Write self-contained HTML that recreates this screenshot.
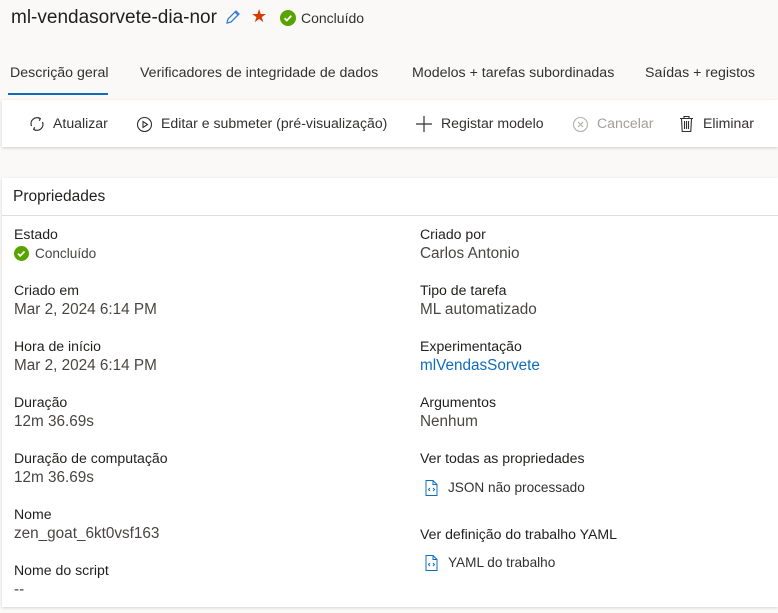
<!DOCTYPE html>
<html><head><meta charset="utf-8"><style>
*{margin:0;padding:0;box-sizing:border-box}
body{width:778px;height:613px;background:#faf9f8;font-family:"Liberation Sans",sans-serif;color:#323130;position:relative;overflow:hidden}
.a{position:absolute;white-space:nowrap}
.lbl{font-size:14.1px;color:#201f1e}
.val{font-size:15.3px;color:#484644}
.tab{font-size:14.2px;color:#323130;top:65px}
.tb{font-size:14.1px;color:#323130;top:115px}
</style></head><body>
<div class="a" style="left:11px;top:7px;font-size:19px;color:#201f1e">ml-vendasorvete-dia-nor</div>
<svg class="a" style="left:224px;top:8px" width="18" height="18" viewBox="0 0 18 18"><path d="M3 15l1-4 8-8 3 3-8 8z M11 4l3 3" fill="none" stroke="#3a7bd5" stroke-width="1.3"/></svg>
<div class="a" style="left:251px;top:6px;font-size:18px;color:#d83b01">★</div>
<svg class="a" style="left:280px;top:10px" width="16" height="16"><circle cx="8" cy="8" r="8" fill="#57a300"/><path d="M4.5 8.2l2.3 2.3 4.5-4.7" fill="none" stroke="#fff" stroke-width="1.8"/></svg>
<div class="a" style="left:301px;top:10px;font-size:14px;color:#323130">Concluído</div>

<div class="a tab" style="left:10px">Descrição geral</div>
<div class="a" style="left:8px;top:93px;width:100px;height:2px;background:#0f6cbd"></div>
<div class="a tab" style="left:140px">Verificadores de integridade de dados</div>
<div class="a tab" style="left:412px">Modelos + tarefas subordinadas</div>
<div class="a tab" style="left:645px">Saídas + registos</div>

<div class="a" style="left:2px;top:100px;width:776px;height:47px;background:#fff;box-shadow:0 1px 3px rgba(0,0,0,.18)"></div>
<svg class="a" style="left:28px;top:115px" width="18" height="18" viewBox="0 0 18 18" fill="none" stroke="#323130" stroke-width="1.2"><path d="M3.5 11A6 6 0 0 1 12 3.5M14.5 7A6 6 0 0 1 6 14.5M10 2.5l2.3 1-1 2.3M8 15.5l-2.3-1 1-2.3"/></svg>
<div class="a tb" style="left:53px">Atualizar</div>
<svg class="a" style="left:136px;top:116px" width="17" height="17"><circle cx="8.5" cy="8.5" r="7" fill="none" stroke="#323130" stroke-width="1.1"/><path d="M7 5.5v6l4.5-3z" fill="none" stroke="#323130" stroke-width="1.1"/></svg>
<div class="a tb" style="left:161px">Editar e submeter (pré-visualização)</div>
<svg class="a" style="left:415px;top:115px" width="18" height="18"><path d="M9 1v16M1 9h16" stroke="#323130" stroke-width="1.2"/></svg>
<div class="a tb" style="left:441px">Registar modelo</div>
<svg class="a" style="left:572px;top:116px" width="17" height="17"><circle cx="8.5" cy="8.5" r="7" fill="none" stroke="#b3b0ad" stroke-width="1.1"/><path d="M6 6l5 5M11 6l-5 5" stroke="#b3b0ad" stroke-width="1.1"/></svg>
<div class="a tb" style="left:597px;color:#a19f9d">Cancelar</div>
<svg class="a" style="left:679px;top:115px" width="15" height="18" viewBox="0 0 15 18" fill="none" stroke="#323130" stroke-width="1.1"><path d="M1 3.5h13M5 3.5V1.5h5v2M2.5 3.5l.7 13h8.6l.7-13M5.5 6v8M7.5 6v8M9.5 6v8"/></svg>
<div class="a tb" style="left:703px">Eliminar</div>

<div class="a" style="left:2px;top:178px;width:776px;height:429px;background:#fff;box-shadow:0 1px 3px rgba(0,0,0,.15)"></div>
<div class="a" style="left:13px;top:188px;font-size:15.5px;color:#201f1e">Propriedades</div>
<div class="a" style="left:2px;top:215px;width:776px;height:1px;background:#e1dfdd"></div>

<div class="a lbl" style="left:14px;top:226px">Estado</div>
<svg class="a" style="left:14px;top:246px" width="15" height="15"><circle cx="7.5" cy="7.5" r="7.5" fill="#57a300"/><path d="M4 7.7l2.2 2.2 4.3-4.4" fill="none" stroke="#fff" stroke-width="1.7"/></svg>
<div class="a" style="left:35px;top:246px;font-size:13.6px;color:#484644">Concluído</div>
<div class="a lbl" style="left:14px;top:282px">Criado em</div>
<div class="a val" style="left:14px;top:301px">Mar 2, 2024 6:14 PM</div>
<div class="a lbl" style="left:14px;top:338px">Hora de início</div>
<div class="a val" style="left:14px;top:357px">Mar 2, 2024 6:14 PM</div>
<div class="a lbl" style="left:14px;top:394px">Duração</div>
<div class="a val" style="left:14px;top:413px">12m 36.69s</div>
<div class="a lbl" style="left:14px;top:450px">Duração de computação</div>
<div class="a val" style="left:14px;top:469px">12m 36.69s</div>
<div class="a lbl" style="left:14px;top:506px">Nome</div>
<div class="a val" style="left:14px;top:525px">zen_goat_6kt0vsf163</div>
<div class="a lbl" style="left:14px;top:562px">Nome do script</div>
<div class="a val" style="left:14px;top:581px">--</div>

<div class="a lbl" style="left:420px;top:226px">Criado por</div>
<div class="a val" style="left:420px;top:245px">Carlos Antonio</div>
<div class="a lbl" style="left:420px;top:282px">Tipo de tarefa</div>
<div class="a val" style="left:420px;top:301px">ML automatizado</div>
<div class="a lbl" style="left:420px;top:338px">Experimentação</div>
<div class="a val" style="left:420px;top:357px;color:#0f6cbd">mlVendasSorvete</div>
<div class="a lbl" style="left:420px;top:394px">Argumentos</div>
<div class="a val" style="left:420px;top:413px">Nenhum</div>
<div class="a lbl" style="left:420px;top:450px">Ver todas as propriedades</div>
<svg class="a" style="left:425px;top:480px" width="13" height="16" viewBox="0 0 13 16" fill="none" stroke="#0f6cbd" stroke-width="1"><path d="M1 .5h7l4 4v11H1z M8 .5v4h4 M5 8l-1.5 1.5L5 11 M8 8l1.5 1.5L8 11"/></svg>
<div class="a" style="left:448px;top:480px;font-size:13.6px;color:#323130">JSON não processado</div>
<div class="a lbl" style="left:420px;top:526px">Ver definição do trabalho YAML</div>
<svg class="a" style="left:425px;top:555px" width="13" height="16" viewBox="0 0 13 16" fill="none" stroke="#0f6cbd" stroke-width="1"><path d="M1 .5h7l4 4v11H1z M8 .5v4h4 M5 8l-1.5 1.5L5 11 M8 8l1.5 1.5L8 11"/></svg>
<div class="a" style="left:448px;top:555px;font-size:13.6px;color:#323130">YAML do trabalho</div>
</body></html>
